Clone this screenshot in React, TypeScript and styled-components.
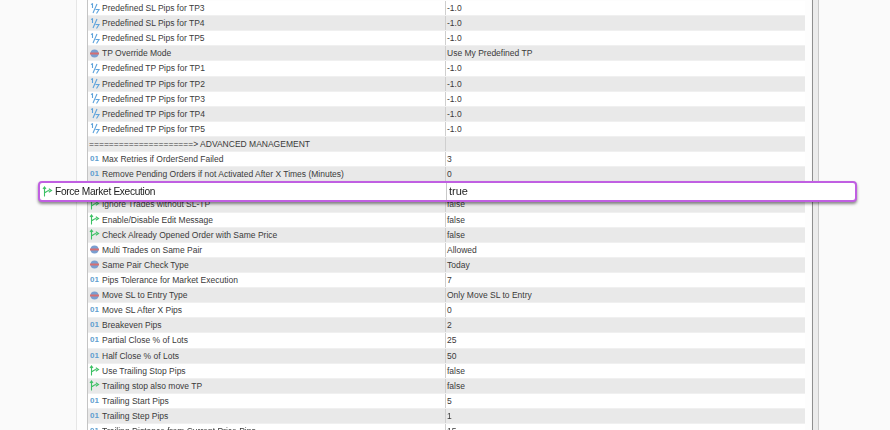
import React from "react";
import styled, { createGlobalStyle } from "styled-components";

const Global = createGlobalStyle`
  html, body { margin: 0; padding: 0; width: 890px; height: 430px; overflow: hidden; background: #fafafa; }
`;

const Stage = styled.div`
  position: relative;
  width: 890px;
  height: 430px;
  overflow: hidden;
  font-family: "Liberation Sans", "Noto Sans", sans-serif;
`;

const Blurred = styled.div`
  display: flex;
  height: 430px;
  padding-left: 76px;
  filter: blur(0.6px);
`;

const Frame = styled.div`
  width: 735px;
  height: 430px;
  flex: none;
  display: flex;
  background: #fdfdfd;
  border-left: 1px solid #e6e6e6;
  padding-left: 10px;
  box-sizing: border-box;
`;

const Table = styled.div`
  width: 717px;
  flex: none;
  padding-top: 1px;
  border-left: 1px solid #c4c4c4;
  margin-right: 7px;
`;

const Edge = styled.div`
  width: 7px;
  flex: none;
  height: 430px;
  box-sizing: border-box;
  background: #ececec;
  border-left: 1px solid #8f8f8f;
  border-right: 1px solid #c9c9c9;
`;

const Row = styled.div<{ $alt: boolean }>`
  display: grid;
  grid-template-columns: 357px 1fr;
  height: 15.11px;
  box-sizing: border-box;
  background: ${(p) => (p.$alt ? "#e9e9e9" : "#ffffff")};
  border-bottom: 1px solid #f0f0f0;
  font-size: 8.5px;
  line-height: 14px;
  color: #3a3a3a;
`;

const NameCell = styled.div`
  display: flex;
  align-items: center;
  gap: 2px;
  padding-left: 1px;
  white-space: nowrap;
  overflow: hidden;
`;

const ValueCell = styled.div`
  padding-left: 1px;
  border-left: 1px solid #cfcfcf;
  white-space: nowrap;
`;

const IconSlot = styled.span`
  width: 11px;
  height: 11px;
  flex: none;
  display: inline-flex;
  align-items: center;
  justify-content: center;
`;

const IntGlyph = styled.span`
  font-size: 8px;
  font-weight: 700;
  color: #5f9fd0;
`;

const Highlight = styled.div`
  position: absolute;
  left: 38px;
  top: 181px;
  width: 819px;
  height: 21px;
  box-sizing: border-box;
  display: grid;
  grid-template-columns: 406px 1fr;
  background: #ffffff;
  border: 2px solid #c05fe2;
  border-radius: 4px;
  box-shadow: 0 2px 3px rgba(0, 0, 0, 0.45);
  line-height: 17px;
  color: #222;
`;

const HighlightName = styled.div`
  display: flex;
  align-items: center;
  gap: 2px;
  padding-left: 2px;
  font-size: 10.2px;
  letter-spacing: -0.34px;
`;

const HighlightValue = styled.div`
  padding-left: 2px;
  border-left: 1px solid #c8c8c8;
  font-size: 11px;
`;

const Fraction = () => (
  <svg width="10" height="11" viewBox="0 0 10 11" fill="none" stroke="#5ea3dc" strokeWidth="1.1">
    <path d="M1 1.5 L2.5 0.8 V5" />
    <path d="M7 1 L3 10" />
    <path d="M5.5 6.5 H9 L6.5 10.5" />
  </svg>
);

const Enum = () => (
  <svg width="9" height="9" viewBox="0 0 9 9">
    <circle cx="4.5" cy="4.5" r="4" fill="#7a9ed0" />
    <rect x="0" y="3.5" width="9" height="2" fill="#d66f72" />
  </svg>
);

const Branch = ({ size = 11 }: { size?: number }) => (
  <svg width={size} height={size} viewBox="0 0 11 11" fill="none" stroke="#3cc064" strokeWidth="1.1">
    <path d="M2.5 10.5 V1.5" />
    <path d="M1 3 L2.5 1 L4 3" />
    <path d="M2.5 6.5 C4 6.5 5 4.5 7.5 4.5" />
    <path d="M6.8 2.8 L9.5 4.5 L6.8 6.2" />
  </svg>
);

type Kind = "f" | "e" | "b" | "i" | "n";
const rows: [Kind, string, string][] = [
  ["f", "Predefined SL Pips for TP3", "-1.0"],
  ["f", "Predefined SL Pips for TP4", "-1.0"],
  ["f", "Predefined SL Pips for TP5", "-1.0"],
  ["e", "TP Override Mode", "Use My Predefined TP"],
  ["f", "Predefined TP Pips for TP1", "-1.0"],
  ["f", "Predefined TP Pips for TP2", "-1.0"],
  ["f", "Predefined TP Pips for TP3", "-1.0"],
  ["f", "Predefined TP Pips for TP4", "-1.0"],
  ["f", "Predefined TP Pips for TP5", "-1.0"],
  ["n", "=====================> ADVANCED MANAGEMENT", ""],
  ["i", "Max Retries if OrderSend Failed", "3"],
  ["i", "Remove Pending Orders if not Activated After X Times (Minutes)", "0"],
  ["n", "", ""],
  ["b", "Ignore Trades without SL-TP", "false"],
  ["b", "Enable/Disable Edit Message", "false"],
  ["b", "Check Already Opened Order with Same Price", "false"],
  ["e", "Multi Trades on Same Pair", "Allowed"],
  ["e", "Same Pair Check Type", "Today"],
  ["i", "Pips Tolerance for Market Execution", "7"],
  ["e", "Move SL to Entry Type", "Only Move SL to Entry"],
  ["i", "Move SL After X Pips", "0"],
  ["i", "Breakeven Pips", "2"],
  ["i", "Partial Close % of Lots", "25"],
  ["i", "Half Close % of Lots", "50"],
  ["b", "Use Trailing Stop Pips", "false"],
  ["b", "Trailing stop also move TP", "false"],
  ["i", "Trailing Start Pips", "5"],
  ["i", "Trailing Step Pips", "1"],
  ["i", "Trailing Distance from Current Price Pips", "15"],
];

const KindIcon = ({ kind }: { kind: Kind }) => {
  if (kind === "n") return null;
  return (
    <IconSlot>
      {kind === "f" && <Fraction />}
      {kind === "e" && <Enum />}
      {kind === "b" && <Branch />}
      {kind === "i" && <IntGlyph>01</IntGlyph>}
    </IconSlot>
  );
};

export default function App() {
  return (
    <Stage>
      <Global />
      <Blurred>
        <Frame>
          <Table>
            {rows.map(([kind, name, value], i) => (
              <Row key={i} $alt={i % 2 === 1}>
                <NameCell>
                  <KindIcon kind={kind} />
                  {name}
                </NameCell>
                <ValueCell>{value}</ValueCell>
              </Row>
            ))}
          </Table>
          <Edge />
        </Frame>
      </Blurred>
      <Highlight>
        <HighlightName>
          <IconSlot>
            <Branch size={13} />
          </IconSlot>
          Force Market Execution
        </HighlightName>
        <HighlightValue>true</HighlightValue>
      </Highlight>
    </Stage>
  );
}
